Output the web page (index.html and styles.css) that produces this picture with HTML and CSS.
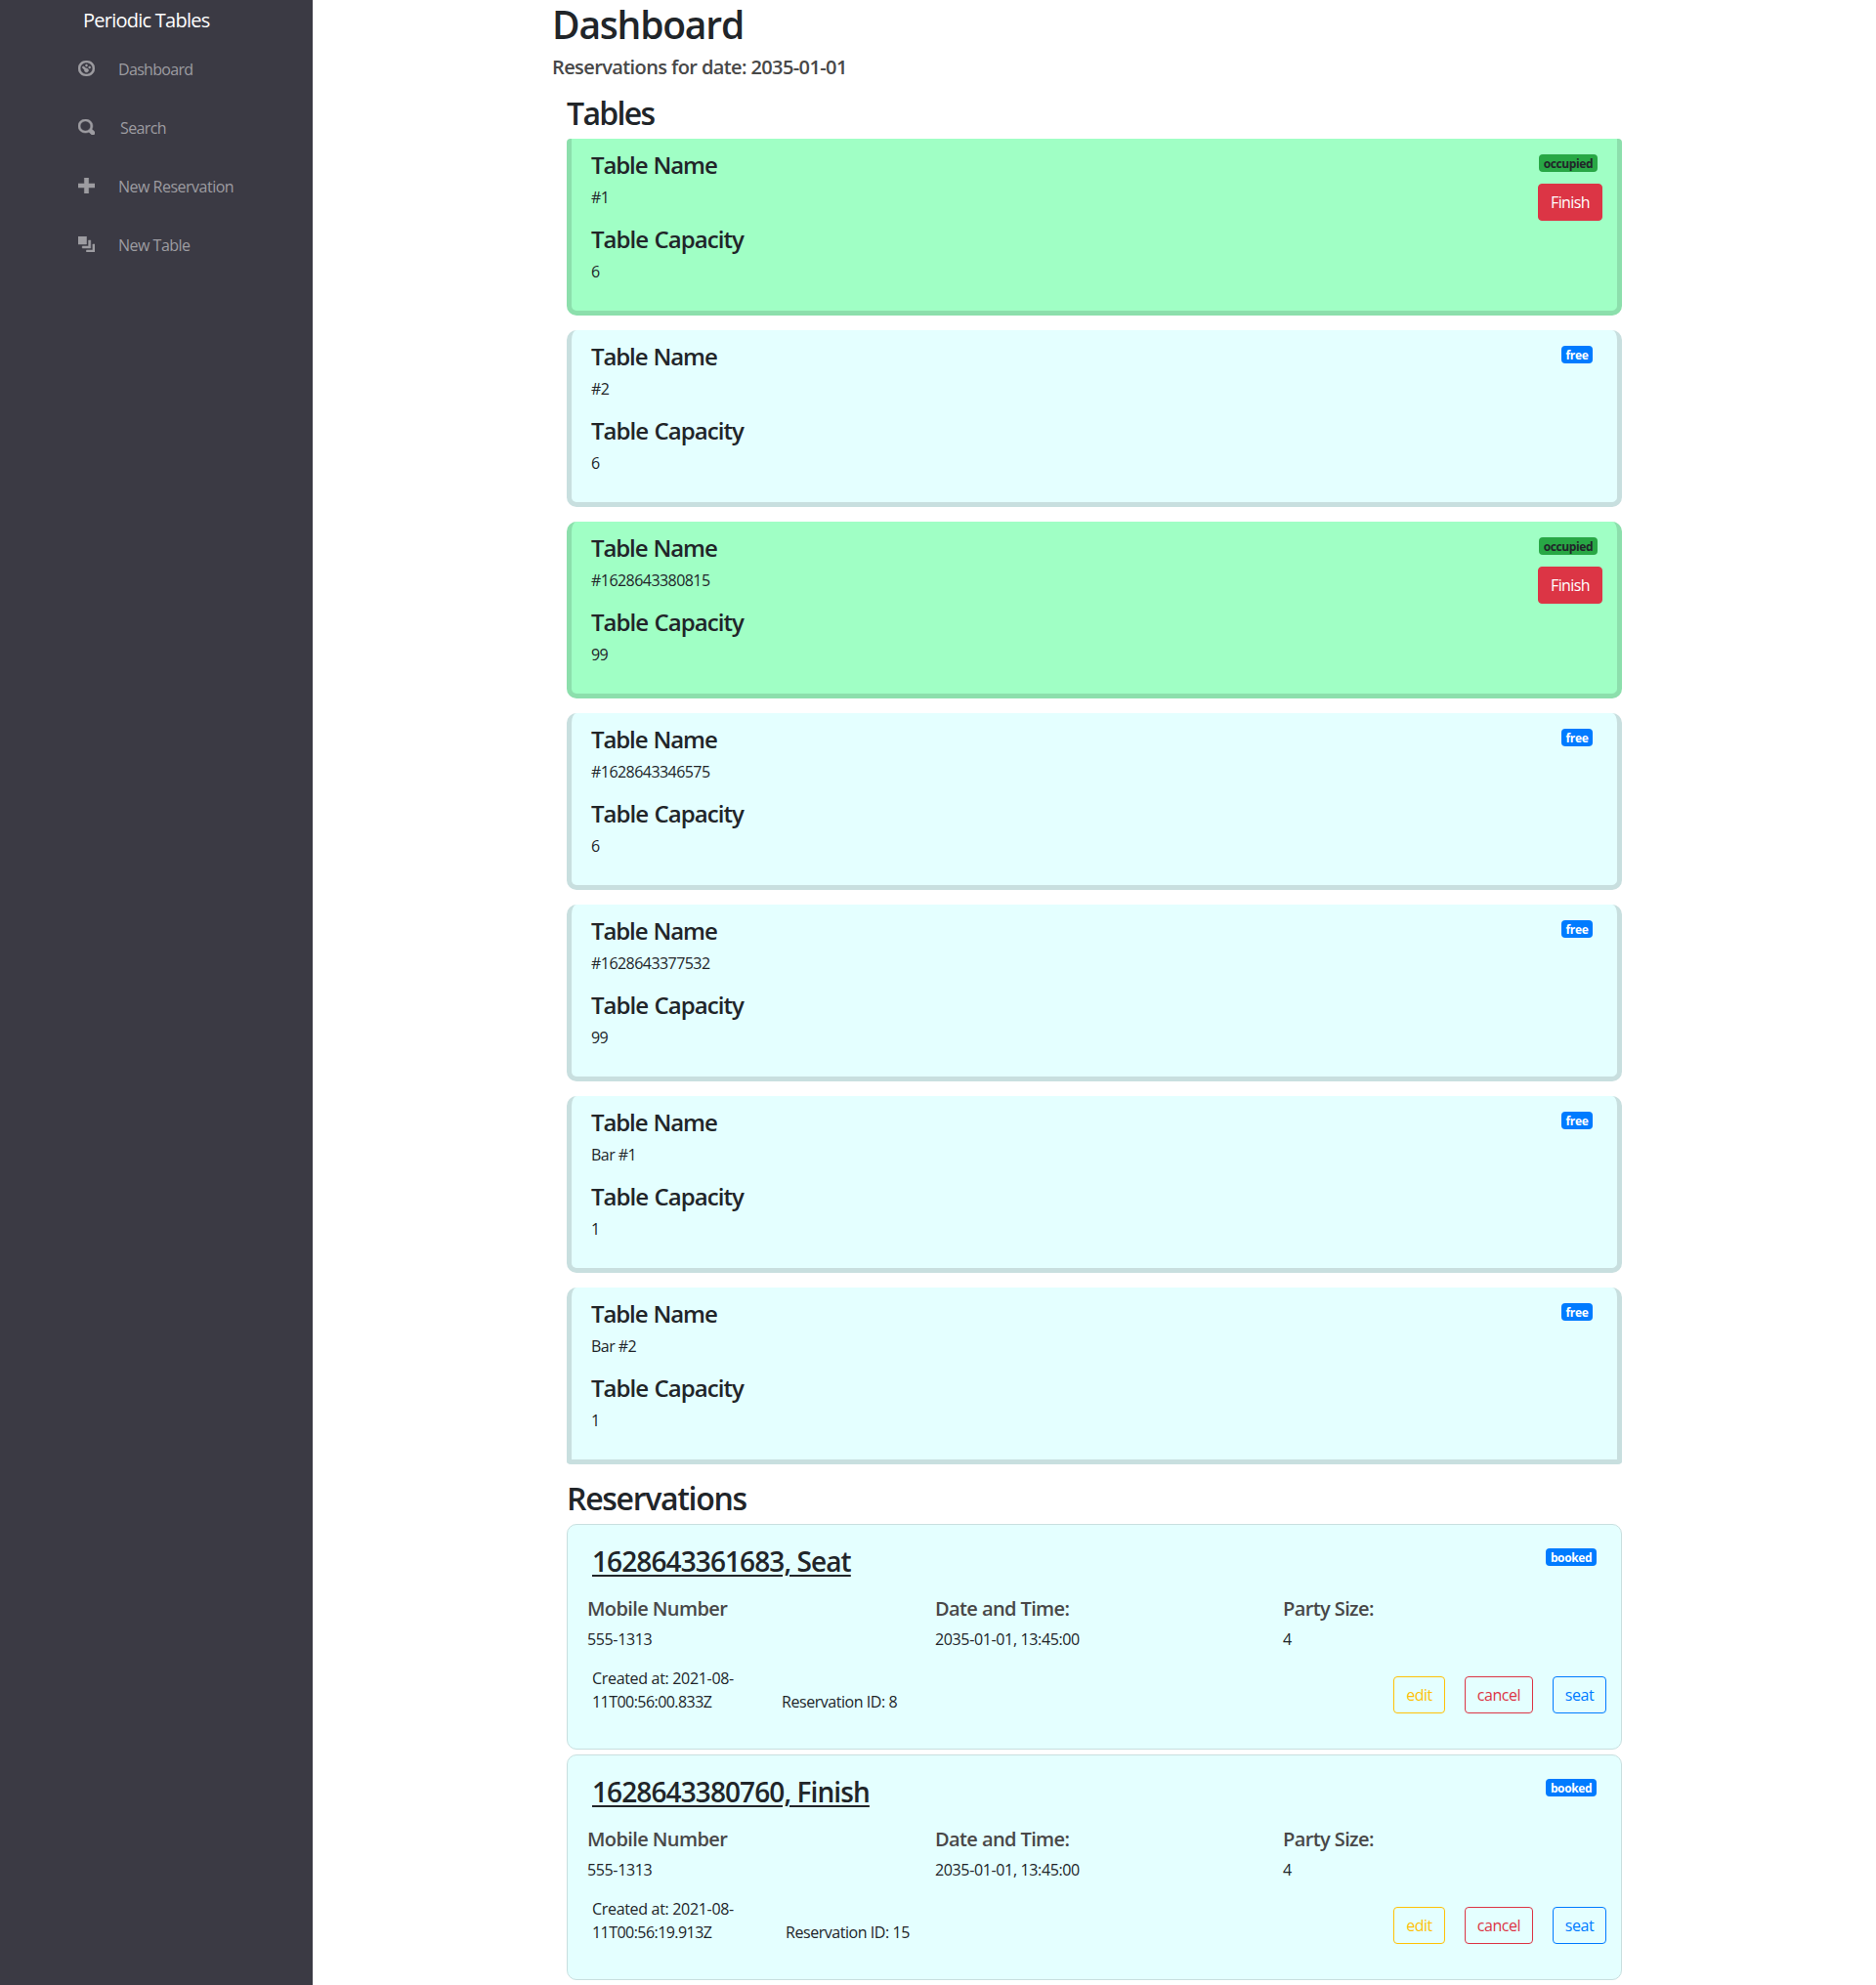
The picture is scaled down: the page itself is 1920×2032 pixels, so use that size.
FILE: index.html
```html
<!DOCTYPE html>
<html lang="en">
<head>
<meta charset="utf-8">
<title>Periodic Tables</title>
<link rel="stylesheet" href="styles.css">
</head>
<body>
<div class="layout">
  <nav class="sidebar">
    <div class="brand">Periodic Tables</div>
    <ul class="nav">
      <li><svg class="icon" viewBox="0 0 8 8" preserveAspectRatio="none"><path d="M4 0c-2.2 0-4 1.8-4 4s1.8 4 4 4 4-1.8 4-4-1.8-4-4-4zm0 1c1.66 0 3 1.34 3 3s-1.34 3-3 3-3-1.34-3-3 1.34-3 3-3zm0 1c-.28 0-.5.22-.5.5s.22.5.5.5.5-.22.5-.5-.22-.5-.5-.5zm-1.66 1a.5.5 0 0 0-.19.84l.91.91c-.02.08-.06.16-.06.25 0 .55.45 1 1 1s1-.45 1-1-.45-1-1-1c-.09 0-.17.04-.25.06l-.91-.91a.5.5 0 0 0-.5-.16zm3.16 0c-.28 0-.5.22-.5.5s.22.5.5.5.5-.22.5-.5-.22-.5-.5-.5z"/></svg><span class="nav-dashboard">Dashboard</span></li>
      <li><svg class="icon" viewBox="0 0 8 8" preserveAspectRatio="none"><path d="M3.5 0c-1.93 0-3.5 1.57-3.5 3.5s1.57 3.5 3.5 3.5c.59 0 1.17-.14 1.66-.41a1 1 0 0 0 .13.13l1 1a1.02 1.02 0 1 0 1.44-1.44l-1-1a1 1 0 0 0-.16-.13c.27-.49.44-1.06.44-1.66 0-1.93-1.55-3.5-3.5-3.5zm0 1c1.39 0 2.5 1.11 2.5 2.5 0 .66-.24 1.27-.66 1.72l-.03.03a1 1 0 0 0-.13.13c-.44.4-1.04.63-1.69.63-1.39 0-2.5-1.11-2.5-2.5s1.11-2.5 2.5-2.5z"/></svg><span class="nav-search">Search</span></li>
      <li><svg class="icon" viewBox="0 0 8 8" preserveAspectRatio="none"><path d="M3 0v3h-3v2h3v3h2v-3h3v-2h-3v-3h-2z"/></svg><span>New Reservation</span></li>
      <li><svg class="icon" viewBox="0 0 8 8" preserveAspectRatio="none"><path d="M0 0v4h4v-4h-4zm5 2v3h-3v1h4v-4h-1zm2 2v3h-3v1h4v-4h-1z"/></svg><span>New Table</span></li>
    </ul>
  </nav>
  <main class="content">
    <h1>Dashboard</h1>
    <h4>Reservations for date: 2035-01-01</h4>
    <section>
      <h2 class="title-tables">Tables</h2>
      <div class="table-list">
        <article class="table-card occupied"><div class="info"><h3>Table Name</h3><p>#1</p><h3 class="capacity">Table Capacity</h3><p>6</p></div><div class="status"><span class="badge green">occupied</span><button class="btn finish">Finish</button></div></article>
        <article class="table-card"><div class="info"><h3>Table Name</h3><p>#2</p><h3 class="capacity">Table Capacity</h3><p>6</p></div><div class="status"><span class="badge free">free</span></div></article>
        <article class="table-card occupied"><div class="info"><h3>Table Name</h3><p>#1628643380815</p><h3 class="capacity">Table Capacity</h3><p>99</p></div><div class="status"><span class="badge green">occupied</span><button class="btn finish">Finish</button></div></article>
        <article class="table-card"><div class="info"><h3>Table Name</h3><p>#1628643346575</p><h3 class="capacity">Table Capacity</h3><p>6</p></div><div class="status"><span class="badge free">free</span></div></article>
        <article class="table-card"><div class="info"><h3>Table Name</h3><p>#1628643377532</p><h3 class="capacity">Table Capacity</h3><p>99</p></div><div class="status"><span class="badge free">free</span></div></article>
        <article class="table-card"><div class="info"><h3>Table Name</h3><p>Bar #1</p><h3 class="capacity">Table Capacity</h3><p>1</p></div><div class="status"><span class="badge free">free</span></div></article>
        <article class="table-card"><div class="info"><h3>Table Name</h3><p>Bar #2</p><h3 class="capacity">Table Capacity</h3><p>1</p></div><div class="status"><span class="badge free">free</span></div></article>
      </div>
      <h2>Reservations</h2>
      <article class="reservation">
        <header><span class="name">1628643361683, Seat</span><span class="badge">booked</span></header>
        <div class="details">
          <div><h4>Mobile Number</h4><p>555-1313</p></div>
          <div><h4>Date and Time:</h4><p>2035-01-01, 13:45:00</p></div>
          <div><h4>Party Size:</h4><p>4</p></div>
        </div>
        <footer>
          <p class="created">Created at: 2021-08-<br><span class="stamp">11T00:56:00.833Z</span></p>
          <p class="rid">Reservation ID: 8</p>
          <div class="actions"><button class="btn edit">edit</button><button class="btn cancel">cancel</button><button class="btn seat">seat</button></div>
        </footer>
      </article>
      <article class="reservation">
        <header><span class="name">1628643380760, Finish</span><span class="badge">booked</span></header>
        <div class="details">
          <div><h4>Mobile Number</h4><p>555-1313</p></div>
          <div><h4>Date and Time:</h4><p>2035-01-01, 13:45:00</p></div>
          <div><h4>Party Size:</h4><p>4</p></div>
        </div>
        <footer>
          <p class="created">Created at: 2021-08-<br><span class="stamp">11T00:56:19.913Z</span></p>
          <p class="rid wide">Reservation ID: 15</p>
          <div class="actions"><button class="btn edit">edit</button><button class="btn cancel">cancel</button><button class="btn seat">seat</button></div>
        </footer>
      </article>
    </section>
  </main>
</div>
</body>
</html>
```
FILE: styles.css
```css
* { box-sizing: border-box; }
body { margin: 0; font: 16px/24px "Open Sans", sans-serif; color: #212529; background: #fff; }
h1, h2, h3, h4, p, ul { margin: 0; padding: 0; }
h1, h2, h3, h4 { font-weight: 600; white-space: nowrap; }

.layout { display: flex; height: 2032px; }

/* Sidebar */
.sidebar { width: 320px; flex: none; background: #3b3a44; color: #9d9ca1; padding: 6px 0 0 80px; }
.brand { font-size: 20px; line-height: 30px; padding-left: 5px; margin-bottom: 5px; color: #fff; letter-spacing: -.75px; }
.nav { list-style: none; }
.nav li { display: flex; height: 60px; align-items: center; gap: 24px; white-space: nowrap; letter-spacing: -.5px; }
.icon { width: 17px; height: 16px; flex: none; fill: currentColor; stroke: currentColor; stroke-width: .25; margin-bottom: 2px; }
.nav-dashboard { letter-spacing: -.68px; }
.nav-search { padding-left: 2px; letter-spacing: -.6px; }

/* Page headings */
.content { width: 1095px; margin-left: 245px; padding-top: 1px; }
.content section { padding-left: 15px; padding-top: 16px; }
h1 { font-size: 39px; line-height: 48px; margin-bottom: 8px; letter-spacing: -1.2px; }
h2 { font-size: 32px; line-height: 38px; margin-bottom: 7px; letter-spacing: -1.3px; }
.title-tables { letter-spacing: -1.7px; }
h3 { font-size: 24px; line-height: 29px; margin-bottom: 8px; letter-spacing: -1.1px; word-spacing: 1px; }
.capacity { letter-spacing: -.95px; }
h4 { font-size: 20px; line-height: 24px; letter-spacing: -.6px; color: #484848; }
p { font-weight: 400; letter-spacing: -.55px; color: #212529; }

/* Tables */
.table-list { margin-bottom: 16px; }
.table-card { display: flex; justify-content: space-between; height: 181px; margin-bottom: 15px; padding: 12px 15px 0 20px; background: #e4ffff; border: 5px solid #c8dfdf; border-top: 0; border-radius: 10px; }
.table-card:first-child { border-top-left-radius: 4px; border-top-right-radius: 4px; }
.table-card:last-child { margin-bottom: 0; border-bottom-left-radius: 4px; border-bottom-right-radius: 4px; }
.table-card.occupied { background: #a0ffc5; border-color: #8cdfac; }
.info p { line-height: 23px; margin-bottom: 16px; }
.status { display: flex; flex-direction: column; align-items: flex-end; padding-top: 4px; }
.badge { height: 18px; width: 52px; border-radius: 4px; background: #007bff; color: #fff; font-size: 12px; line-height: 19px; font-weight: 700; letter-spacing: -.4px; text-align: center; }
.green { width: 60px; background: #28a745; color: #212529; margin: 0 5px 12px 0; letter-spacing: -.4px; }
.free { width: 32px; margin-right: 10px; letter-spacing: -.3px; }
.btn { height: 38px; padding: 0; border: 1px solid; border-radius: 4px; background: transparent; font: 16px/36px "Open Sans", sans-serif; letter-spacing: -.45px; }
.finish { width: 66px; background: #dc3545; border-color: #dc3545; color: #fff; letter-spacing: -.6px; }

/* Reservations */
.reservation { height: 231px; margin-bottom: 5px; padding-top: 20px; background: #e4ffff; border: 1px solid #c8dfdf; border-radius: 10px; }
.reservation header { display: flex; justify-content: space-between; padding: 0 25px; margin-bottom: 20px; }
.reservation .badge { margin-top: 4px; }
.name { font-size: 28px; line-height: 34px; font-weight: 600; letter-spacing: -.9px; text-decoration: underline; text-decoration-thickness: 2px; text-underline-offset: 3px; }
.details { display: grid; grid-template-columns: repeat(3, 1fr); padding-left: 10px; margin-bottom: 16px; }
.details > div { padding-left: 10px; }
.details h4 { margin-bottom: 7px; }
.details p { letter-spacing: -.36px; }
.reservation footer { display: flex; align-items: flex-end; padding: 0 15px 0 25px; }
.reservation .created { width: 194px; letter-spacing: -.32px; }
.created .stamp { letter-spacing: -.55px; }
.reservation .rid { letter-spacing: -.45px; }
.reservation .wide { padding-left: 4px; }
.actions { display: flex; gap: 20px; margin-left: auto; }
.edit { width: 53px; color: #ffc107; }
.cancel { width: 70px; color: #dc3545; }
.seat { width: 55px; color: #007bff; }
```
